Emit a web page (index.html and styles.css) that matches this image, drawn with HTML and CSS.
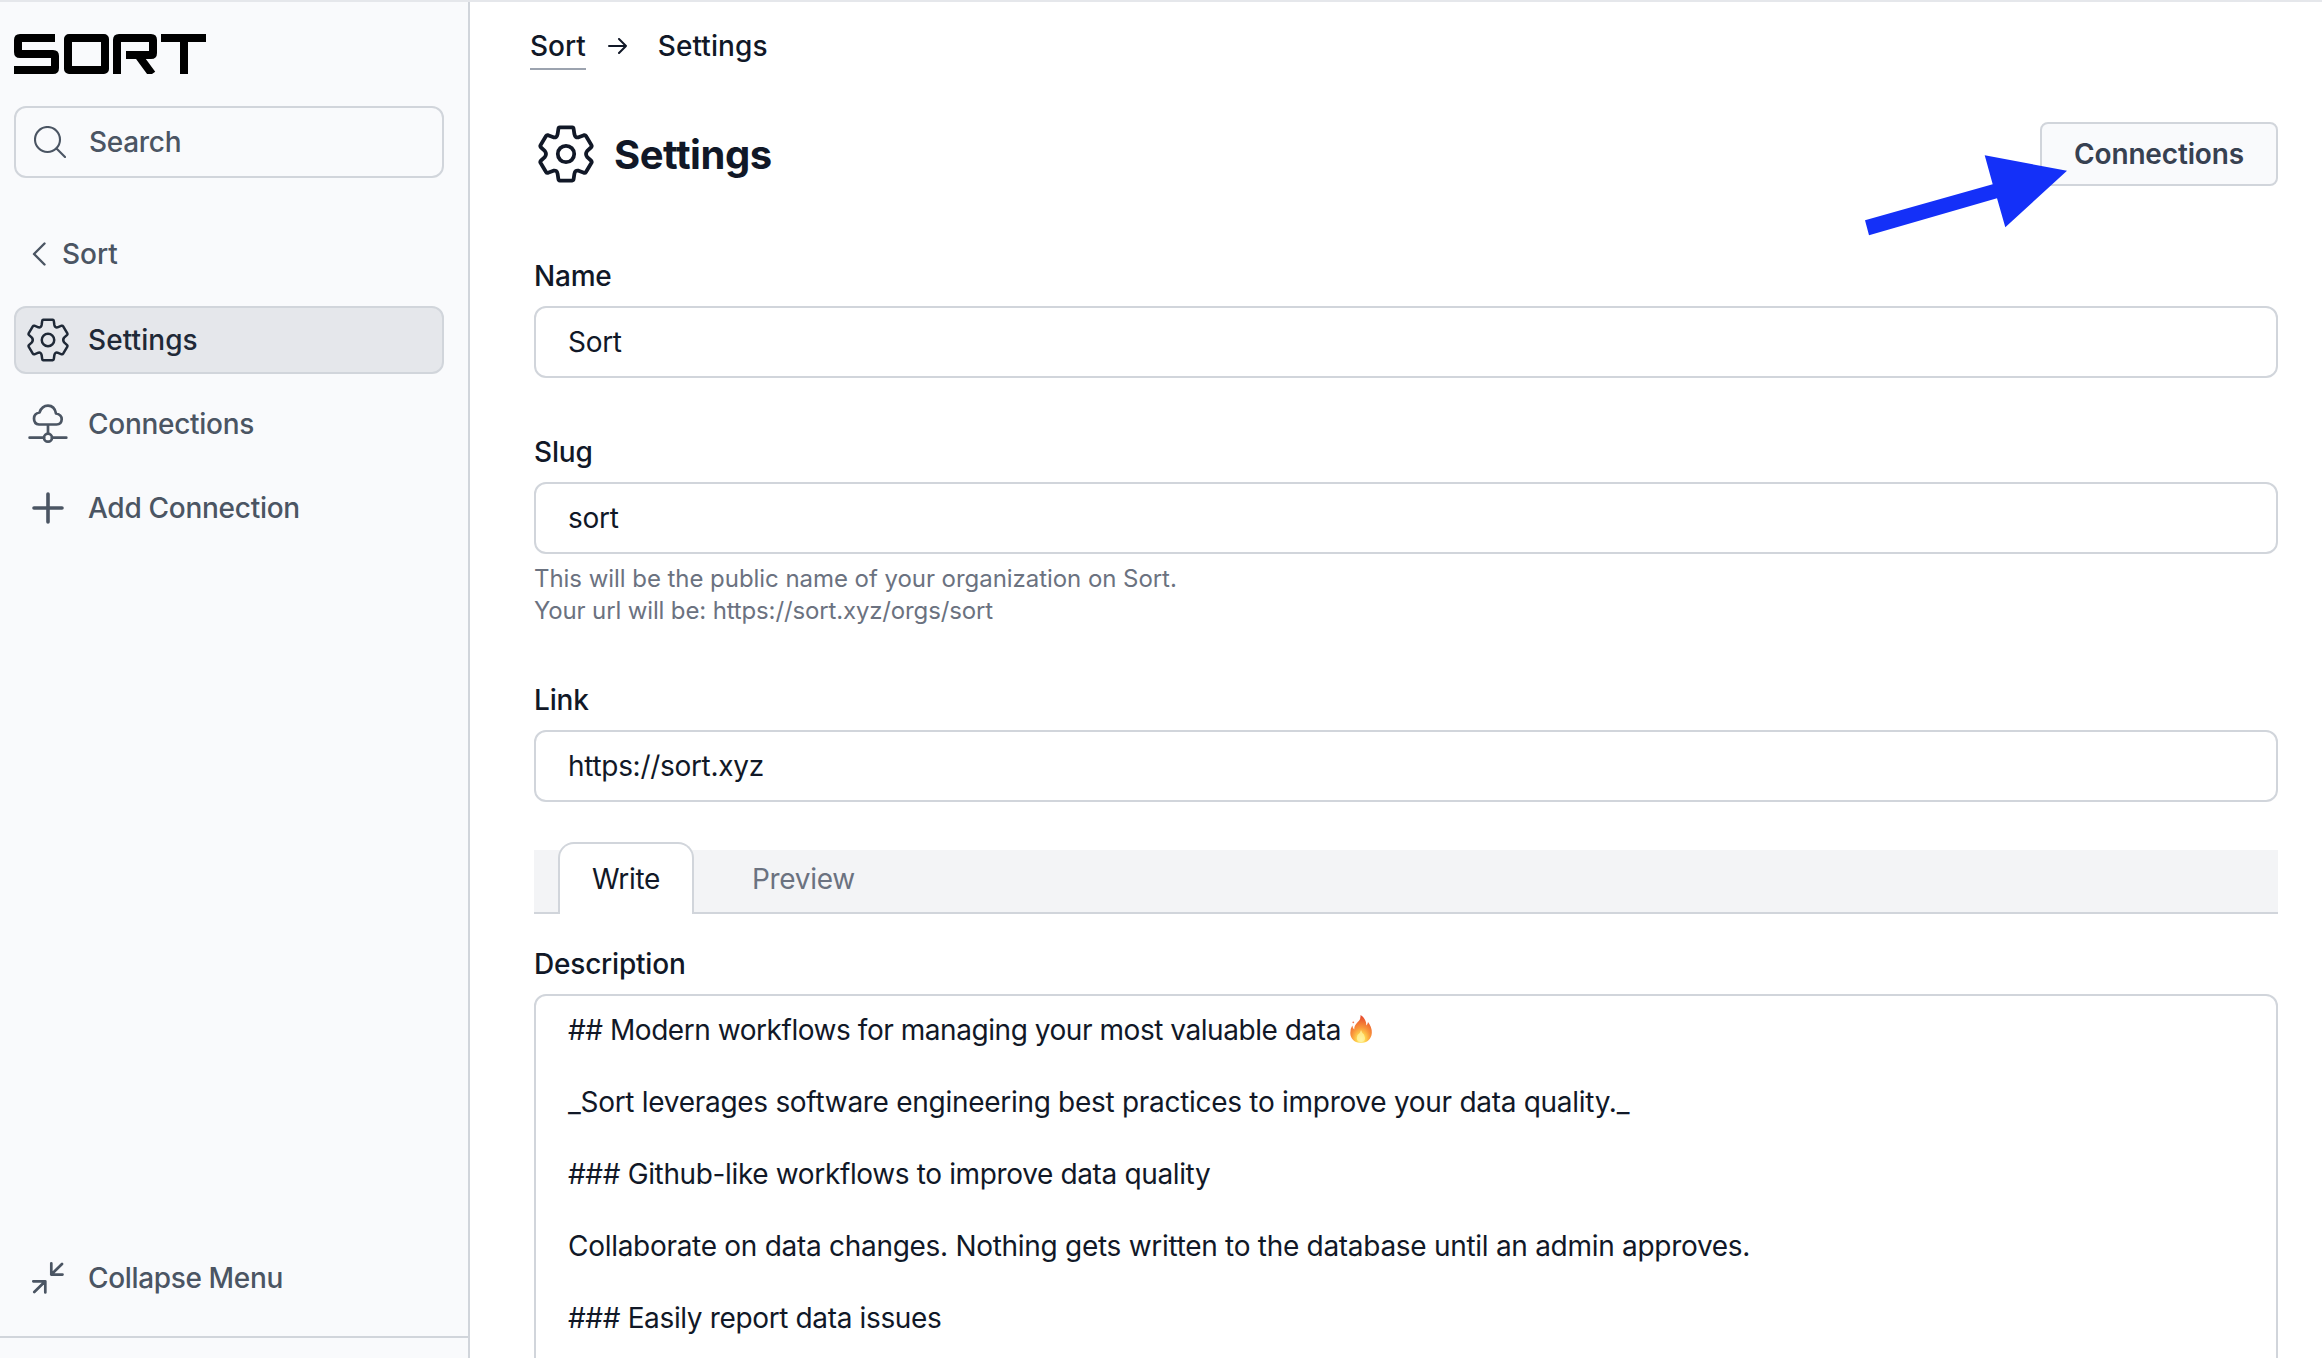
FILE: index.html
```
<!DOCTYPE html>
<html lang="en">
<head>
<meta charset="utf-8">
<title>Settings</title>
<link rel="stylesheet" href="styles.css">
</head>
<body>
<svg class="defs" width="0" height="0" aria-hidden="true">
  <symbol id="gear" viewBox="0 0 58 60">
    <path d="M22.500 2.500H35.500Q36.700 2.500 36.900 4L37.700 9.500Q38.500 13.500 42 12.700L47.600 10.500Q49 10.200 49.700 11.400L55.400 21Q56 22 55.100 23L51 26.700Q48.500 30 51 33.300L55.100 37Q56 38 55.400 39L49.700 48.600Q49 49.800 47.600 49.500L42 47.300Q38.500 46.500 37.700 50.500L36.900 56Q36.700 57.500 35.500 57.500H22.500Q21.300 57.500 21.100 56L20.300 50.500Q19.500 46.500 16 47.300L10.400 49.500Q9 49.800 8.300 48.600L2.600 39Q2 38 2.900 37L7 33.300Q9.500 30 7 26.700L2.900 23Q2 22 2.600 21L8.300 11.400Q9 10.200 10.400 10.500L16 12.700Q19.500 13.500 20.300 9.500L21.100 4Q21.300 2.500 22.500 2.500Z"/>
    <circle cx="29" cy="30" r="8.500"/>
  </symbol>
</svg>
<div class="app">
  <aside class="sidebar">
    <svg class="logo" viewBox="0 0 192 40" aria-label="SORT">
      <g fill="none" stroke="#000" stroke-width="8" stroke-linejoin="round">
        <path d="M41 4H6Q4 4 4 6V18Q4 20 6 20H39Q41 20 41 22V34Q41 36 39 36H0"/>
        <rect x="54" y="4" width="37" height="32" rx="1"/>
        <path d="M103 40V6Q103 4 105 4H137Q139 4 139 6V19Q139 21 137 21H112M124 21L138 40" stroke-linejoin="miter"/>
        <path d="M147 4H192M170 4V40"/>
      </g>
    </svg>
    <div class="search">
      <svg class="search-icon" viewBox="0 0 32 32"><circle cx="13.500" cy="13.500" r="12.500"/><path d="M22.500 22.500L31 31"/></svg>
      <span>Search</span>
    </div>
    <a class="back"><svg class="chevron" viewBox="0 0 14 24"><path d="M12.500 1.500L2 12L12.500 22.500"/></svg><span>Sort</span></a>
    <nav class="nav">
      <a class="item active"><svg class="icon gear-small"><use href="#gear"/></svg><span>Settings</span></a>
      <a class="item"><svg class="icon" viewBox="0 0 44 44"><path d="M13 22.500Q8 22 8 16.500Q8 11.500 13.500 10.500Q16 3.700 22 3.700Q28.500 3.700 30 11.500Q35.700 12.500 35.700 17.300Q35.500 22.500 30.500 22.500ZM22 22.500V31.500M3.600 35.700H18M26 35.700H40.300"/><circle cx="22" cy="35.700" r="4"/></svg><span>Connections</span></a>
      <a class="item"><svg class="icon plus" viewBox="0 0 44 44"><path d="M22 8V36M8 22H36"/></svg><span>Add Connection</span></a>
    </nav>
    <a class="item collapse"><svg class="icon" viewBox="0 0 44 44"><path d="M36 8L25.300 18.500M25.300 7.300V18.600H36.500M7.300 25.300H19.300V36.500M19 25.500L8.300 36"/></svg><span>Collapse Menu</span></a>
    <div class="sidebar-foot"></div>
  </aside>
  <main class="main">
    <div class="crumbs">
      <a class="crumb-link">Sort</a>
      <svg class="crumb-arrow" viewBox="0 0 20 16"><path d="M1 8H18M11 1L18 8L11 15"/></svg>
      <span>Settings</span>
    </div>
    <header class="heading">
      <svg class="gear-large"><use href="#gear"/></svg>
      <h1>Settings</h1>
      <button class="button">Connections</button>
      <svg class="pointer" viewBox="0 0 203 81"><path d="M0 65.300L127.700 29.300L119.700 0.300L202 15.700L140.300 72.300L132 43.300L4 80.300Z"/></svg>
    </header>
    <section class="field">
      <label>Name</label>
      <div class="input">Sort</div>
    </section>
    <section class="field">
      <label>Slug</label>
      <div class="input">sort</div>
      <p class="help">This will be the public name of your organization on Sort.<br><span class="url">Your url will be: https://sort.xyz/orgs/sort</span></p>
    </section>
    <section class="field">
      <label>Link</label>
      <div class="input">https://sort.xyz</div>
    </section>
    <div class="tabs"><span class="tab selected">Write</span><span class="tab">Preview</span></div>
    <section class="description">
      <label>Description</label>
      <div class="textarea">
        <p class="lead">## Modern workflows for managing your most valuable data <svg class="flame" viewBox="0 0 22 28">
          <defs>
            <radialGradient id="fire" cx="0.500" cy="0.880" r="0.800"><stop offset="0" stop-color="#fff9b0"/><stop offset="0.250" stop-color="#ffd44d"/><stop offset="0.550" stop-color="#f9963a"/><stop offset="1" stop-color="#e8502f"/></radialGradient>
          </defs>
          <path fill="url(#fire)" d="M10.500 0C14 2 16.500 6 16.300 10.500Q17.700 9.500 18 7Q22 12 21.800 18C21.500 24 17 28 11 28C5 28 0.300 24 0.300 18Q0.300 13.500 2.300 10.500Q2.700 13.500 4.300 14.500C4 10 7.500 7.500 9.200 5.500Q10.700 3.500 10.500 0Z"/>
          <path fill="#fff3a0" opacity="0.750" d="M11 15Q12 18 14 19.500Q17 26.500 11 27Q5 26.500 7.500 20Q10.500 18 11 15Z"/>
          <circle fill="#f07a55" cx="3.300" cy="7.300" r="0.900"/>
        </svg></p>
        <p>_Sort leverages software engineering best practices to improve your data quality._</p>
        <p class="sub">### Github-like workflows to improve data quality</p>
        <p>Collaborate on data changes. Nothing gets written to the database until an admin approves.</p>
        <p class="sub">### Easily report data issues</p>
      </div>
    </section>
  </main>
</div>
</body>
</html>
```

FILE: styles.css
```
* { box-sizing: border-box; }
body { margin: 0; font: 400 28px/36px Inter, "Liberation Sans", sans-serif; color: #111827; background: #fff; }
h1, p { margin: 0; }
svg { display: block; flex: none; fill: none; stroke: currentColor; stroke-width: 2.4; stroke-linecap: round; stroke-linejoin: round; }
.defs { position: absolute; }
.app { display: flex; height: 1358px; overflow: hidden; border-top: 2px solid #e5e7eb; }

.sidebar { width: 470px; flex: none; display: flex; flex-direction: column; padding-top: 32px; background: #f9fafc; border-right: 2px solid #d1d5db; color: #4b5563; font-weight: 500; }
.logo { width: 192px; height: 40px; margin-left: 14px; stroke-linecap: butt; }
.search { display: flex; align-items: center; gap: 23px; width: 430px; height: 72px; margin: 32px 0 0 14px; padding-left: 18px; border: 2px solid #d1d5db; border-radius: 12px; letter-spacing: -0.3px; }
.search-icon { width: 32px; height: 32px; stroke-width: 2.1; }
.back { display: flex; align-items: center; gap: 16px; height: 36px; margin: 58px 0 0 32px; }
.chevron { width: 14px; height: 24px; }
.nav { display: flex; flex-direction: column; gap: 16px; margin-top: 34px; }
.item { display: flex; align-items: center; gap: 18px; width: 430px; height: 68px; flex: none; margin-left: 14px; padding-left: 10px; border: 2px solid transparent; border-radius: 12px; letter-spacing: -0.28px; }
.active { color: #1f2937; background: #e5e7eb; border-color: #d1d5db; letter-spacing: 0.08px; }
.icon { width: 44px; height: 44px; stroke-width: 2.7; }
.gear-small { stroke-width: 3.4; }
.plus { stroke-width: 3.6; }
.collapse { margin-top: auto; letter-spacing: -0.35px; }
.sidebar-foot { height: 22px; margin-top: 24px; border-top: 2px solid #d1d5db; flex: none; }

.main { flex: 1; min-width: 0; padding: 26px 44px 0 64px; }
.crumbs { display: flex; align-items: center; height: 42px; margin-left: -4px; font-weight: 500; }
.crumb-link { height: 42px; line-height: 36px; border-bottom: 2px solid #9ca3af; }
.crumb-arrow { width: 20px; height: 16px; margin: 0 30px 6px 22px; stroke-width: 2; }
.crumbs span { height: 42px; letter-spacing: 0.08px; }
.heading { position: relative; display: flex; align-items: center; height: 64px; margin-top: 52px; }
.gear-large { width: 56px; height: 58px; margin-left: 4px; stroke-width: 3.9; }
h1 { margin-left: 20px; padding-top: 1px; font-size: 40px; line-height: 48px; font-weight: 700; letter-spacing: -0.45px; }
.button { margin-left: auto; width: 238px; height: 64px; padding: 0; font: 600 28px/36px Inter, sans-serif; letter-spacing: -0.15px; color: #374151; background: #f9fafc; border: 2px solid #d1d5db; border-radius: 8px; }
.pointer { position: absolute; right: 210px; top: 33px; width: 203px; height: 81px; fill: #1430f8; stroke: none; }
.field { margin-bottom: 56px; }
.heading + .field { margin-top: 72px; }
label { display: block; height: 48px; line-height: 36px; font-weight: 500; letter-spacing: -0.2px; }
.input { height: 72px; padding: 16px 32px; border: 2px solid #d1d5db; border-radius: 12px; letter-spacing: -0.3px; }
.help { height: 72px; padding-top: 9px; font-size: 24px; line-height: 32px; letter-spacing: -0.05px; color: #6b7280; }
.url { letter-spacing: -0.14px; }
.tabs { display: flex; align-items: flex-end; height: 64px; margin-top: -8px; padding-left: 24px; background: #f3f4f6; box-shadow: inset 0 -2px #d1d5db; letter-spacing: -0.3px; }
.tab { height: 72px; padding: 19px 25px 0 58px; line-height: 36px; color: #6b7280; }
.selected { width: 136px; padding: 17px 0 0 32px; color: #111827; background: #fff; border: 2px solid #d1d5db; border-bottom: 0; border-radius: 16px 16px 0 0; }
.description { margin-top: 32px; }
.textarea { height: 500px; padding: 16px 32px; border: 2px solid #d1d5db; border-radius: 12px; letter-spacing: -0.29px; }
.textarea p { margin-bottom: 36px; white-space: nowrap; }
.textarea .lead { letter-spacing: -0.45px; }
.textarea .sub { letter-spacing: -0.36px; }
.flame { display: inline-block; width: 22px; height: 28px; margin-left: 2px; vertical-align: -3px; stroke: none; }
```
